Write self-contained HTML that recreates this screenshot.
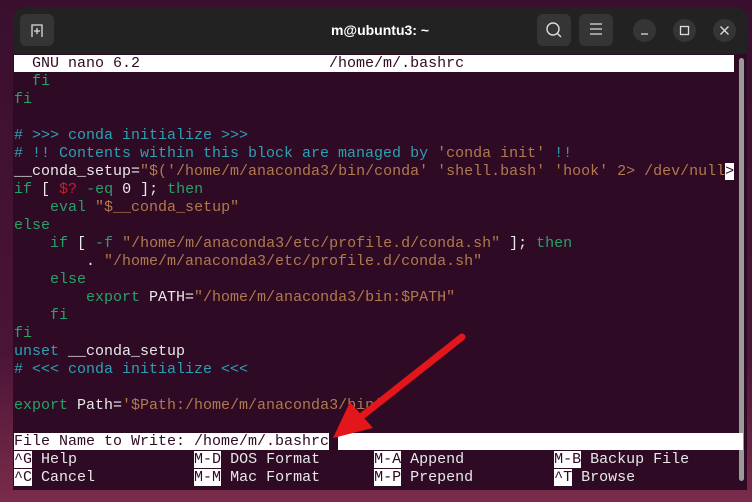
<!DOCTYPE html>
<html><head><meta charset="utf-8"><style>
*{margin:0;padding:0;box-sizing:border-box}
body{width:752px;height:502px;overflow:hidden;background:linear-gradient(180deg,#3a0f2e 0%,#4a1436 70%,#7a2c4a 100%);position:relative;font-family:"Liberation Sans",sans-serif}
#win{position:absolute;left:13px;top:7px;width:734px;height:483px;border-radius:12px 12px 0 0;overflow:hidden;background:#2f0a24}
#tb{position:absolute;left:0;top:0;width:734px;height:47px;background:#222}
.btn{position:absolute;top:7px;width:34px;height:32px;border-radius:6px;background:#353535}
.cir{position:absolute;top:12px;width:23px;height:23px;border-radius:50%;background:#353535}
#title{position:absolute;left:0;width:734px;top:15px;text-align:center;color:#fff;font-weight:bold;font-size:14px}
#term{position:absolute;left:1px;top:48px;font-family:"Liberation Mono",monospace;font-size:15px;line-height:18px;color:#e8e8e8}
.r{height:18px;white-space:pre}
.g{color:#26a269}.c{color:#2aa1b3}.o{color:#b07a4e}.red{color:#d01b24}.b{color:#2aa1b3}
.inv{background:#fff;color:#300a24}
#sb{position:absolute;left:726px;top:51px;width:5px;height:423px;border-radius:3px;background:#9a9a9a}
</style></head><body>
<div id="win">
<div id="tb">
<div class="btn" style="left:7px"><svg width="34" height="32"><path d="M12 23V11h10v12M17 14v6M14 17h6" stroke="#ddd" stroke-width="1.3" fill="none"/></svg></div>
<div id="title">m@ubuntu3: ~</div>
<div class="btn" style="left:524px"><svg width="34" height="32"><circle cx="16" cy="15" r="6" stroke="#ddd" stroke-width="1.4" fill="none"/><path d="M20.5 19.5l3.5 3.5" stroke="#ddd" stroke-width="1.4"/></svg></div>
<div class="btn" style="left:566px"><svg width="34" height="32"><path d="M11 10h12M11 15h12M11 20h12" stroke="#ddd" stroke-width="1.3"/></svg></div>
<div class="cir" style="left:620px"><svg width="23" height="23"><path d="M8 15h7" stroke="#ddd" stroke-width="1.3"/></svg></div>
<div class="cir" style="left:660px"><svg width="23" height="23"><rect x="7.5" y="7.5" width="8" height="8" stroke="#ddd" stroke-width="1.3" fill="none"/></svg></div>
<div class="cir" style="left:700px"><svg width="23" height="23"><path d="M7.5 7.5l8 8M15.5 7.5l-8 8" stroke="#ddd" stroke-width="1.3"/></svg></div>
</div>
<div id="sb"></div>
<div id="term">
<div class="r"><span class="inv">  GNU nano 6.2                     /home/m/.bashrc                              </span></div>
<div class="r"><span class="g">  fi</span></div>
<div class="r"><span class="g">fi</span></div>
<div class="r"> </div>
<div class="r"><span class="c"># &gt;&gt;&gt; conda initialize &gt;&gt;&gt;</span></div>
<div class="r"><span class="c"># !! Contents within this block are managed by </span><span class="o">'conda init'</span><span class="c"> !!</span></div>
<div class="r">__conda_setup=<span class="o">"$('/home/m/anaconda3/bin/conda' 'shell.bash' 'hook' 2&gt; /dev/null</span><span class="inv">&gt;</span></div>
<div class="r"><span class="g">if</span> [ <span class="red">$?</span> <span class="g">-eq</span> 0 ]; <span class="g">then</span></div>
<div class="r">    <span class="g">eval</span> <span class="o">"$__conda_setup"</span></div>
<div class="r"><span class="g">else</span></div>
<div class="r">    <span class="g">if</span> [ <span class="g">-f</span> <span class="o">"/home/m/anaconda3/etc/profile.d/conda.sh"</span> ]; <span class="g">then</span></div>
<div class="r">        . <span class="o">"/home/m/anaconda3/etc/profile.d/conda.sh"</span></div>
<div class="r">    <span class="g">else</span></div>
<div class="r">        <span class="g">export</span> PATH=<span class="o">"/home/m/anaconda3/bin:$PATH"</span></div>
<div class="r">    <span class="g">fi</span></div>
<div class="r"><span class="g">fi</span></div>
<div class="r"><span class="b">unset</span> __conda_setup</div>
<div class="r"><span class="c"># &lt;&lt;&lt; conda initialize &lt;&lt;&lt;</span></div>
<div class="r"> </div>
<div class="r"><span class="g">export</span> Path=<span class="o">'$Path:/home/m/anaconda3/bin'</span></div>
<div class="r"> </div>
<div class="r"><span class="inv">File Name to Write: /home/m/.bashrc</span> <span class="inv">                                             </span></div>
<div class="r"><span class="inv">^G</span> Help             <span class="inv">M-D</span> DOS Format      <span class="inv">M-A</span> Append          <span class="inv">M-B</span> Backup File</div>
<div class="r"><span class="inv">^C</span> Cancel           <span class="inv">M-M</span> Mac Format      <span class="inv">M-P</span> Prepend         <span class="inv">^T</span> Browse</div>
</div>
</div>
<svg style="position:absolute;left:0;top:0" width="752" height="502">
<path d="M462 337L362 416" stroke="#e3161b" stroke-width="7" stroke-linecap="round"/>
<path d="M333 438L350 402L373 428Z" fill="#e3161b"/>
</svg>
</body></html>
